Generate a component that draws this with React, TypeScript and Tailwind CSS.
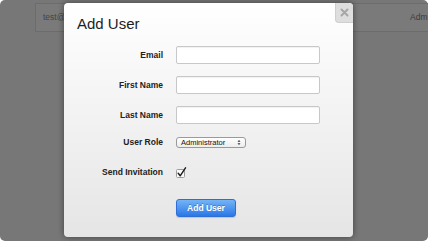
import React from "react";

const labelCls = "w-[99px] shrink-0 text-right text-[8.5px] font-bold text-[#222] leading-none";

const Field = ({ label, className = "", children }: { label: string; className?: string; children: React.ReactNode }) => (
  <div className={`flex items-center gap-[13px] ${className}`}>
    <span className={labelCls}>{label}</span>
    {children}
  </div>
);

const TextInput = () => (
  <div className="w-[144px] h-[18px] bg-white border border-[#c8c8c8] rounded-[2px] shadow-[inset_0_1px_1px_rgba(0,0,0,0.06)]" />
);

export default function App() {
  return (
    <div className="w-[429px] h-[243px] bg-white overflow-hidden font-['Liberation_Sans',Arial,sans-serif]">
      <div className="relative w-[428px] h-[241px] rounded-[5px] bg-[#777777] overflow-hidden">
        {/* page behind the overlay */}
        <div className="mt-[3px] ml-[35px] h-[29px] flex items-center border-l border-t border-b border-[#6c6c6c] bg-[#7a7a7a]">
          <div className="w-[28px] overflow-hidden whitespace-nowrap pl-[7px] text-[8.5px] text-[#444]">test@</div>
          <div className="ml-auto w-[18px] overflow-hidden whitespace-nowrap text-[8.5px] text-[#3c3c3c]">Adm</div>
        </div>

        {/* modal */}
        <div className="absolute left-[64px] top-[3px] w-[289px] h-[234px] rounded-[4px] bg-gradient-to-b from-white to-[#e5e5e5] shadow-[0_0_6px_rgba(0,0,0,0.45)]">
          <div className="absolute right-0 top-0 w-[18px] h-[20px] bg-[#dedede] border-l border-b border-[#cfcfcf] rounded-bl-[4px] rounded-tr-[4px] flex items-center justify-center">
            <svg width="9" height="9" viewBox="0 0 9 9">
              <path d="M1.5 1.5 L7.5 7.5 M7.5 1.5 L1.5 7.5" stroke="#a6a6a6" strokeWidth="2" strokeLinecap="round" />
            </svg>
          </div>

          <div className="pt-[12px] pl-[13px] h-[30px]">
            <h1 className="text-[15px] leading-[18px] text-[#1e1e1e]">Add User</h1>
          </div>

          <Field label="Email" className="mt-[13px]">
            <TextInput />
          </Field>
          <Field label="First Name" className="mt-[12px]">
            <TextInput />
          </Field>
          <Field label="Last Name" className="mt-[12px]">
            <TextInput />
          </Field>
          <Field label="User Role" className="mt-[13px] h-[11px]">
            <div className="w-[70px] h-[11px] flex items-center justify-between pl-[4px] pr-[4px] border border-[#9a9a9a] rounded-[3px] bg-gradient-to-b from-white to-[#ededed]">
              <span className="text-[7.5px] leading-none text-[#111]">Administrator</span>
              <svg width="4" height="7" viewBox="0 0 4 7">
                <path d="M0.5 2.8 L2 1 L3.5 2.8 Z M0.5 4.2 L2 6 L3.5 4.2 Z" fill="#333" />
              </svg>
            </div>
          </Field>
          <Field label="Send Invitation" className="mt-[19px] h-[10px]">
            <svg width="11" height="11" viewBox="0 0 11 11">
              <rect x="0.5" y="2.5" width="8" height="8" rx="1" fill="#fafafa" stroke="#9c9c9c" />
              <path d="M2.2 6.2 L4.2 8.8 L9.5 0.8" fill="none" stroke="#1a1a1a" strokeWidth="1.4" strokeLinecap="round" strokeLinejoin="round" />
            </svg>
          </Field>
          <div className="mt-[17px] ml-[112px]">
            <button className="w-[60px] h-[18px] rounded-[3px] border border-[#2d6fd6] bg-gradient-to-b from-[#74b3f7] to-[#2a78e6] text-[8.5px] font-bold text-white [text-shadow:0_-1px_0_rgba(0,0,0,0.25)] shadow-[0_1px_1px_rgba(0,0,0,0.15)]">
              Add User
            </button>
          </div>
        </div>
      </div>
    </div>
  );
}
